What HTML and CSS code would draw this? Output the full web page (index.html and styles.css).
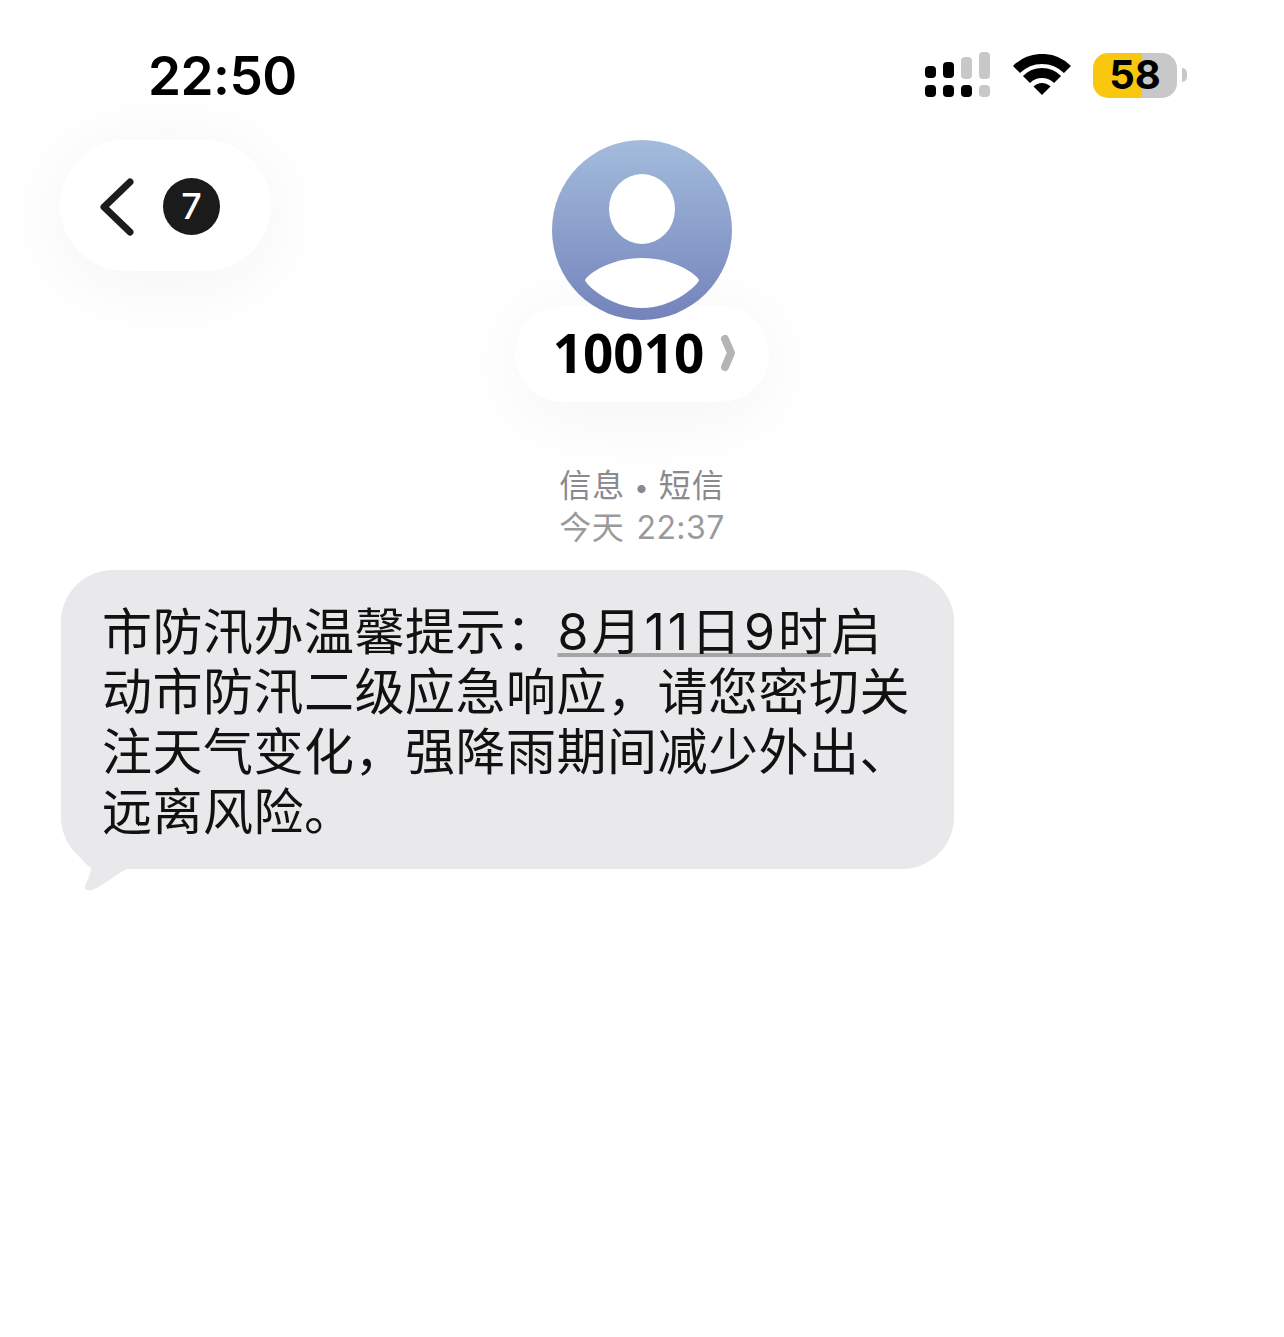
FILE: index.html
```html
<!DOCTYPE html>
<html lang="zh">
<head>
<meta charset="utf-8">
<meta name="viewport" content="width=device-width, initial-scale=1">
<title>10010</title>
<link rel="stylesheet" href="styles.css">
</head>
<body>
<div class="status-bar">
  <div class="clock">22:50</div>
  <div class="status-icons">
    <!-- signal: two rows of dots, the top right ones grow into bars -->
    <svg class="signal" width="66" height="46" viewBox="0 0 66 46">
      <rect x="0" y="14" width="11" height="12" rx="4" fill="#000"/>
      <rect x="18" y="10" width="11" height="16" rx="4" fill="#000"/>
      <rect x="36" y="5" width="11" height="22" rx="4" fill="#c8c8c8"/>
      <rect x="54" y="0" width="11" height="27" rx="4" fill="#c8c8c8"/>
      <rect x="0" y="33" width="11" height="12" rx="4" fill="#000"/>
      <rect x="18" y="33" width="11" height="12" rx="4" fill="#000"/>
      <rect x="36" y="33" width="11" height="12" rx="4" fill="#000"/>
      <rect x="54" y="33" width="11" height="12" rx="4" fill="#c8c8c8"/>
    </svg>
    <svg class="wifi" width="58" height="42" viewBox="0 0 58 42">
      <path d="M3.500 15.500 A36 36 0 0 1 54.500 15.500" fill="none" stroke="#000" stroke-width="10"/>
      <path d="M13.440 25.440 A22 22 0 0 1 44.560 25.440" fill="none" stroke="#000" stroke-width="10"/>
      <path d="M29 41 L20.500 32.500 A12 12 0 0 1 37.500 32.500 Z" fill="#000"/>
    </svg>
    <div class="battery">
      <div class="battery-body"><span class="battery-level">58</span></div>
      <div class="battery-cap"></div>
    </div>
  </div>
</div>

<div class="nav">
  <div class="back-pill">
    <svg class="chevron" width="36" height="60" viewBox="0 0 36 60">
      <path d="M31 5 L5 30 L31 55" fill="none" stroke="#1c1c1c" stroke-width="7" stroke-linecap="round" stroke-linejoin="round"/>
    </svg>
    <div class="unread">7</div>
  </div>
  <div class="contact">
    <svg class="avatar" width="180" height="180" viewBox="0 0 180 180">
      <defs>
        <linearGradient id="avatarFill" x1="0" y1="0" x2="0" y2="1">
          <stop offset="0" stop-color="#a3bcdc"/>
          <stop offset="1" stop-color="#7483bb"/>
        </linearGradient>
      </defs>
      <circle cx="90" cy="90" r="90" fill="url(#avatarFill)"/>
      <ellipse cx="90" cy="69" rx="33" ry="35" fill="#fff"/>
      <path d="M33 140 C36 134 58 118 90 118 C122 118 144 134 147 140 C147 144 122 168 90 168 C58 168 33 144 33 140 Z" fill="#fff"/>
    </svg>
    <div class="name-pill">
      <span class="name">10010</span>
      <svg class="name-arrow" width="16" height="38" viewBox="0 0 16 38">
        <path d="M5 5 L11 19 L5 33" fill="none" stroke="#b4b4b4" stroke-width="8" stroke-linecap="round" stroke-linejoin="round"/>
      </svg>
    </div>
  </div>
</div>

<div class="meta">
  <div class="meta-kind">信息 <b class="meta-dot">•</b> 短信</div>
  <div class="meta-time">今天 22:37</div>
</div>

<div class="thread">
  <div class="bubble">
    <svg class="tail" width="70" height="95" viewBox="0 0 70 95">
      <path d="M0 0 C2 30 12 55 30 68 C29 75 26 82 24 86 C23 90 27 91 31 90 C42 86 52 76 66 69 L66 0 Z" fill="#e9e9eb"/>
    </svg>
    <p class="bubble-text">市防汛办温馨提示：<span class="date-link">8月11日9时</span>启<br>动市防汛二级应急响应，请您密切关<br>注天气变化，强降雨期间减少外出、<br>远离风险。</p>
  </div>
</div>
</body>
</html>
```

FILE: styles.css
```css
html, body {
  margin: 0;
  padding: 0;
  background: #fff;
}

body {
  width: 1284px;
  height: 1337px;
  overflow: hidden;
  font-family: Inter, "Noto Sans CJK SC", sans-serif;
  color: #000;
}

/* status bar */
.status-bar {
  display: flex;
  justify-content: space-between;
  align-items: center;
  height: 140px;
  box-sizing: border-box;
  padding: 0 97px 0 148px;
}

.clock {
  font-family: Inter, sans-serif;
  font-weight: 600;
  font-size: 53px;
  line-height: 60px;
  letter-spacing: -0.5px;
  margin-top: 12px;
}

.status-icons {
  display: flex;
  align-items: center;
  margin-top: 10px;
}

.signal {
  margin-right: 22px;
}

.wifi {
  margin-right: 22px;
}

.battery {
  display: flex;
  align-items: center;
}

.battery-body {
  width: 84px;
  height: 45px;
  border-radius: 15px;
  background: linear-gradient(to right, #f9c80e 0, #f9c80e 49px, #c8c8c8 49px);
  display: flex;
  align-items: center;
  justify-content: center;
}

.battery-level {
  font-family: Inter, sans-serif;
  font-weight: 700;
  font-size: 40px;
  line-height: 43px;
  margin-bottom: 2px;
}

.battery-cap {
  width: 5px;
  height: 14px;
  margin-left: 5px;
  background: #c8c8c8;
  border-radius: 0 8px 8px 0;
}

/* back button, avatar and name */
.nav {
  position: relative;
  display: flex;
  justify-content: center;
  height: 318px;
}

.back-pill {
  position: absolute;
  left: 60px;
  top: 0;
  width: 211px;
  height: 131px;
  box-sizing: border-box;
  padding: 2px 0 0 39px;
  display: flex;
  align-items: center;
  gap: 28px;
  border-radius: 66px;
  background: #fff;
  box-shadow: 0 10px 90px rgba(0, 0, 0, 0.05);
}

.unread {
  width: 57px;
  height: 57px;
  border-radius: 50%;
  background: #1b1b1b;
  color: #fff;
  font-family: Inter, sans-serif;
  font-weight: 500;
  font-size: 36px;
  line-height: 57px;
  text-align: center;
}

.contact {
  display: flex;
  flex-direction: column;
  align-items: center;
}

.avatar {
  display: block;
  flex: none;
  position: relative;
  z-index: 1;
}

.name-pill {
  display: flex;
  align-items: center;
  justify-content: center;
  gap: 16px;
  width: 254px;
  height: 96px;
  box-sizing: border-box;
  padding: 0 0 2px 5px;
  margin-top: -14px;
  border-radius: 48px;
  background: #fff;
  box-shadow: 0 10px 90px rgba(0, 0, 0, 0.05);
}

.name {
  font-family: "Noto Sans", sans-serif;
  font-weight: 700;
  font-size: 53px;
  line-height: 56px;
}

/* message time */
.meta {
  position: relative;
  margin-top: 7px;
  text-align: center;
  font-size: 32px;
  line-height: 41px;
  color: #8a8a8e;
}

.meta-kind {
  height: 41px;
  letter-spacing: 1px;
}

.meta-dot {
  font-size: 26px;
  line-height: 0;
}

.meta-time {
  margin-top: 1px;
  letter-spacing: 0.4px;
  word-spacing: 3px;
  color: #9a9a9c;
}

/* message */
.thread {
  padding: 0 0 0 61px;
  margin-top: 22px;
}

.bubble {
  position: relative;
  width: 893px;
  height: 299px;
  box-sizing: border-box;
  padding: 32px 0 0 41px;
  border-radius: 52px;
  background: #e9e9eb;
}

.tail {
  position: absolute;
  left: 0;
  top: 230px;
}

.bubble-text {
  position: relative;
  margin: 0;
  font-size: 50px;
  line-height: 60px;
  letter-spacing: 0.5px;
  white-space: nowrap;
  color: #111;
}

.date-link {
  margin-left: 1px;
  letter-spacing: 3px;
  text-decoration: underline 4px #a5a5a5;
  text-decoration-skip-ink: none;
  text-underline-offset: 3px;
}
```
